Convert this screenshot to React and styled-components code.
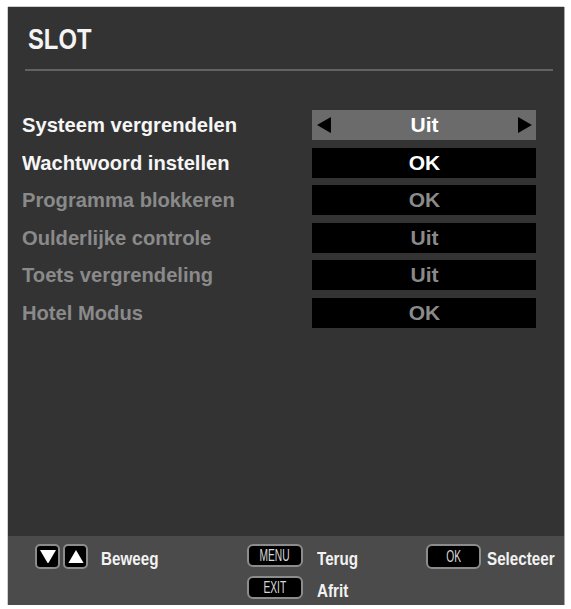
import React from "react";
import styled, { createGlobalStyle } from "styled-components";

const GlobalStyle = createGlobalStyle`
  body {
    margin: 0;
    background: #fff;
    font-family: "Liberation Sans", Arial, sans-serif;
  }
`;

const items = [
  { label: "Systeem vergrendelen", value: "Uit", active: true, selected: true },
  { label: "Wachtwoord instellen", value: "OK", active: true },
  { label: "Programma blokkeren", value: "OK" },
  { label: "Oulderlijke controle", value: "Uit" },
  { label: "Toets vergrendeling", value: "Uit" },
  { label: "Hotel Modus", value: "OK" },
];

function Triangle({ dir, size = 14, color = "#000" }) {
  const pts = {
    left: "13,0 13,15 0,7.5",
    right: "0,0 13,7.5 0,15",
    up: "7,0 14,12 0,12",
    down: "0,0 14,0 7,12",
  }[dir];
  const box = dir === "left" || dir === "right" ? "0 0 13 15" : "0 0 14 12";
  const [, , w, h] = box.split(" ").map(Number);
  return (
    <svg width={w * (size / 14)} height={h * (size / 14)} viewBox={box}>
      <polygon points={pts} fill={color} />
    </svg>
  );
}

export default function App() {
  return (
    <>
      <GlobalStyle />
      <Panel>
        <Header>
          <Title>SLOT</Title>
        </Header>
        <Divider />
        <List>
          {items.map((it) => (
            <Row key={it.label}>
              <Label $active={it.active}>{it.label}</Label>
              <ValueBox $selected={it.selected} $active={it.active}>
                {it.selected && <Triangle dir="left" size={15} />}
                <span>{it.value}</span>
                {it.selected && <Triangle dir="right" size={15} />}
              </ValueBox>
            </Row>
          ))}
        </List>
        <Footer>
          <Hint>
            <ArrowKey>
              <Triangle dir="down" size={16} color="#fff" />
            </ArrowKey>
            <ArrowKey>
              <Triangle dir="up" size={16} color="#fff" />
            </ArrowKey>
            <HintText $gap={13}>Beweeg</HintText>
          </Hint>
          <HintStack>
            <Hint>
              <Key $w={56} $h={23}>
                <KeyText>MENU</KeyText>
              </Key>
              <HintText $gap={14}>Terug</HintText>
            </Hint>
            <Hint>
              <Key $w={56} $h={23}>
                <KeyText>EXIT</KeyText>
              </Key>
              <HintText $gap={14}>Afrit</HintText>
            </Hint>
          </HintStack>
          <Hint>
            <Key $w={55} $h={25}>
              <KeyText>OK</KeyText>
            </Key>
            <HintText $gap={6}>Selecteer</HintText>
          </Hint>
        </Footer>
      </Panel>
    </>
  );
}

const Panel = styled.div`
  margin: 7px 0 0 8px;
  width: 556px;
  height: 598px;
  background: #333333;
  display: flex;
  flex-direction: column;
  box-shadow: 1px 0 0 #a8a8a8, 0 -1px 0 #cfcfcf, -1px 0 0 #cfcfcf;
`;

const Header = styled.div`
  padding: 16px 0 0 20px;
`;

const Title = styled.h1`
  margin: 0;
  font-size: 29px;
  line-height: 32px;
  font-weight: bold;
  color: #f4f4f4;
  transform: scaleX(0.82);
  transform-origin: left center;
`;

const Divider = styled.div`
  margin: 14px 0 0 17px;
  width: 528px;
  height: 2px;
  background: #626262;
`;

const List = styled.div`
  margin-top: 39px;
  display: flex;
  flex-direction: column;
  gap: 7.5px;
`;

const Row = styled.div`
  display: grid;
  grid-template-columns: 1fr 224px;
  padding: 0 28px 0 14px;
  height: 30px;
`;

const Label = styled.div`
  font-size: 21px;
  line-height: 30px;
  font-weight: bold;
  white-space: nowrap;
  color: ${(p) => (p.$active ? "#f6f6f6" : "#8a8a8a")};
  transform: scaleX(0.96);
  transform-origin: left center;
`;

const ValueBox = styled.div`
  display: flex;
  align-items: center;
  justify-content: space-between;
  padding: 0 4px 0 5px;
  background: ${(p) => (p.$selected ? "#6b6b6b" : "#000")};
  font-size: 21px;
  line-height: 30px;
  font-weight: bold;
  color: ${(p) => (p.$active ? "#fff" : "#8a8a8a")};

  span {
    flex: 1;
    text-align: center;
  }
`;

const Footer = styled.div`
  margin-top: auto;
  height: 69px;
  box-sizing: border-box;
  background: #4b4b4b;
  padding: 8px 0 0 27px;
  display: grid;
  grid-template-columns: 212px 179px 1fr;
  align-items: start;
`;

const HintStack = styled.div`
  display: flex;
  flex-direction: column;
  gap: 5px;
`;

const Hint = styled.div`
  display: flex;
  align-items: flex-start;
  gap: 3px;
`;

const ArrowKey = styled.div`
  width: 25px;
  height: 25px;
  box-sizing: border-box;
  border: 2px solid #8c8c8c;
  border-radius: 5px;
  background: #000;
  display: flex;
  align-items: center;
  justify-content: center;
`;

const Key = styled.div`
  width: ${(p) => p.$w}px;
  height: ${(p) => p.$h}px;
  box-sizing: border-box;
  border: 2px solid #8c8c8c;
  border-radius: 6px;
  background: #000;
  display: flex;
  align-items: center;
  justify-content: center;
`;

const KeyText = styled.span`
  display: inline-block;
  font-size: 16px;
  color: #d8d8d8;
  transform: scaleX(0.64);
`;

const HintText = styled.span`
  display: inline-block;
  margin-left: ${(p) => p.$gap - 3}px;
  padding-top: 3px;
  font-size: 19px;
  line-height: 24px;
  font-weight: bold;
  color: #f2f2f2;
  transform: scaleX(0.8);
  transform-origin: left center;
`;
